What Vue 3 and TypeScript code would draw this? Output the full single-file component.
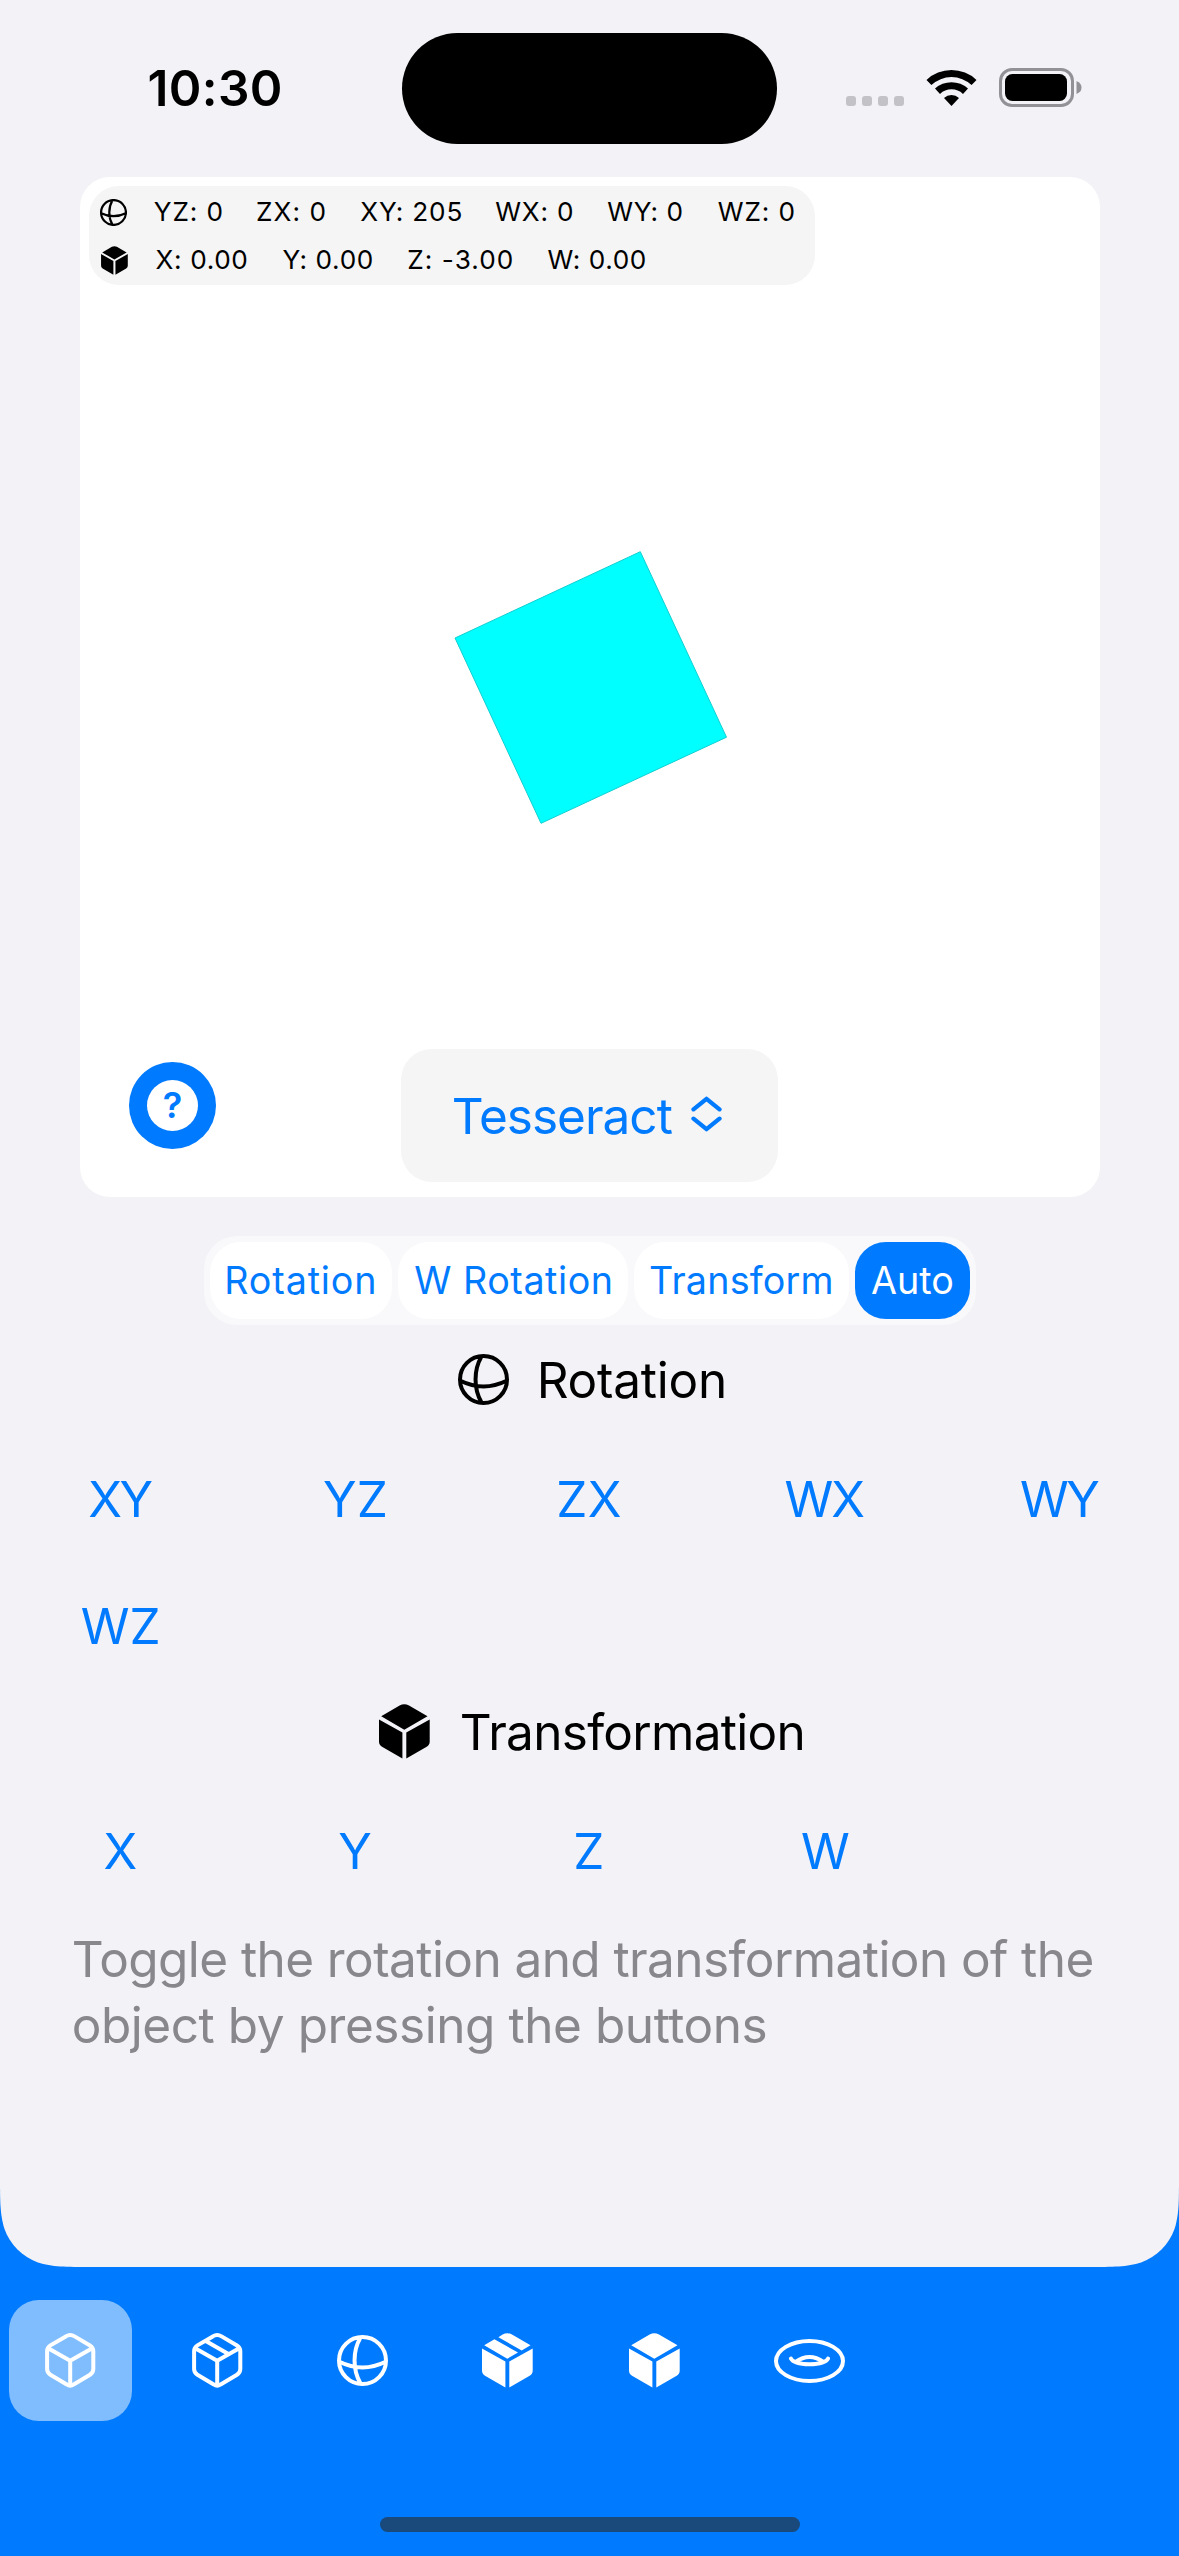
<script setup lang="ts">
import { ref } from 'vue'
import type { Directive } from 'vue'

interface Label {
  text: string
  width: number
}
interface Reading extends Label {
  gap: number
}

// Spreads the glyphs of a one-line label over an exact width by adjusting its tracking.
// Measuring at ten times the size keeps the fractions of a pixel.
const vFit: Directive<HTMLElement, number> = {
  mounted(el, { value }) {
    const ctx = document.createElement('canvas').getContext('2d')
    const text = (el.textContent ?? '').trim()
    if (!ctx || !text) return
    const css = getComputedStyle(el)
    ctx.font = `${css.fontWeight} ${parseFloat(css.fontSize) * 10}px ${css.fontFamily}`
    const m = ctx.measureText(text)
    const left = m.actualBoundingBoxLeft / 10
    const ink = left + m.actualBoundingBoxRight / 10
    if (text.length > 1) el.style.letterSpacing = `${(value - ink) / (text.length - 1)}px`
    el.style.textIndent = `${left}px`
    el.style.width = `${value}px`
  },
}

const angles: Reading[] = [
  { text: 'YZ: 0', width: 67.5, gap: 0 },
  { text: 'ZX: 0', width: 67.5, gap: 35.5 },
  { text: 'XY: 205', width: 100.5, gap: 36 },
  { text: 'WX: 0', width: 76.5, gap: 34.5 },
  { text: 'WY: 0', width: 74, gap: 35.5 },
  { text: 'WZ: 0', width: 75.5, gap: 36.5 },
]
const offsets: Reading[] = [
  { text: 'X: 0.00', width: 90.5, gap: 0 },
  { text: 'Y: 0.00', width: 89, gap: 36.5 },
  { text: 'Z: -3.00', width: 103.5, gap: 36.5 },
  { text: 'W: 0.00', width: 97, gap: 36 },
]

const modes = [
  { text: 'Rotation', width: 146.5, box: 182 },
  { text: 'W Rotation', width: 195.5, box: 230 },
  { text: 'Transform', width: 180.5, box: 215 },
  { text: 'Auto', width: 81, box: 115 },
]
const mode = ref('Auto')

const rotations: Label[] = [
  { text: 'XY', width: 63 },
  { text: 'YZ', width: 61.5 },
  { text: 'ZX', width: 61.5 },
  { text: 'WX', width: 78.5 },
  { text: 'WY', width: 78 },
  { text: 'WZ', width: 76.5 },
]
const translations: Label[] = [
  { text: 'X', width: 31 },
  { text: 'Y', width: 31 },
  { text: 'Z', width: 27.5 },
  { text: 'W', width: 45 },
]

const CUBE =
  'M20.8 3.4Q25.2 .8 29.6 3.4L45 12.4Q48.3 14.4 48.3 18.2V36Q48.3 39.8 45 41.8L28.6 51.4Q25.2 54 21.8 51.4L5.4 41.8Q2.1 39.8 2.1 36V18.2Q2.1 14.4 5.4 12.4ZM3.6 15.4L25.2 27.8L46.8 15.4M25.2 27.8V52'
const SIDES =
  'M0 15.4L23.4 28.6V54.5L3 42.8Q0 41 0 37.5ZM50.7 15.4L27.3 28.6V54.5L47.7 42.8Q50.7 41 50.7 37.5Z'
const CUBE_TOP = 'M2.2 12.2L20.6 1.5Q25.3 -1 30 1.5L48.5 12.2L25.3 25.7Z'
const BOX_TOP =
  'M2.2 12.2L12.4 6.2L36 19.6L25.3 25.7ZM16.4 4.3L20.6 1.6Q25.3 -1 30 1.5L48.5 12.2L39.7 17.4Z'
const SPHERE =
  'M25.5 2A23.5 23.5 0 1 1 25.5 49A23.5 23.5 0 1 1 25.5 2M23.4 2.8C15.6 16 15.6 35 23.4 48.2M2.4 26.8Q25.5 38.2 48.6 26.8'
const TORUS =
  'M35.5 2A33.5 20 0 1 1 35.5 42A33.5 20 0 1 1 35.5 2M17 19.6C21 27.2 50 27.2 54 19.6M21.5 23Q35.5 13 49.5 23'

const tabs = [
  { id: 'cube', box: 123, w: 51, h: 55, d: CUBE, solid: false },
  { id: 'package', box: 123, w: 51, h: 55, d: CUBE + 'M14.2 8.2L36 20.7', solid: false },
  { id: 'sphere', box: 119, w: 51, h: 51, d: SPHERE, solid: false },
  { id: 'package-solid', box: 123, w: 51, h: 55, d: SIDES + BOX_TOP, solid: true },
  { id: 'cube-solid', box: 123, w: 51, h: 55, d: SIDES + CUBE_TOP, solid: true },
  { id: 'torus', box: 139, w: 71, h: 44, d: TORUS, solid: false },
]
const tab = ref('cube')
</script>

<template>
  <div class="screen">
    <main class="panel">
      <header class="status">
        <span v-fit="131" class="time">10:30</span>
        <div class="island"></div>
        <div class="cell"><i v-for="n in 4" :key="n"></i></div>
        <svg class="wifi" width="52" height="38" viewBox="0 0 52 38">
          <path d="M.5 10.9A36.6 36.6 0 0 1 50.5 10.9L45.6 16.1A29.3 29.3 0 0 0 5.4 16.1ZM9 19.6A24.3 24.3 0 0 1 42 19.6L37 24.9A16.7 16.7 0 0 0 14 24.9ZM18 29A11 11 0 0 1 33 29L25.5 37Z" />
        </svg>
        <svg class="battery" width="84" height="40" viewBox="0 0 84 40">
          <rect x="1.5" y="1.5" width="72" height="36" rx="11.5" fill="none" stroke="#929196" stroke-width="3" />
          <rect x="6" y="6" width="62" height="27" rx="7.5" />
          <path d="M77.5 13Q82.5 15 82.5 19.5T77.5 26Z" fill="#929196" />
        </svg>
      </header>

      <section class="stage">
        <svg class="view" width="1020" height="1020" viewBox="0 0 1020 1020">
          <path d="M375 461L560.3 374.7L646.5 560.2L461 646.3Z" fill="#0ff" stroke="#10cfd2" stroke-width="1" />
        </svg>
        <div class="readout">
          <div class="line">
            <svg class="mark" width="27" height="27" viewBox="0 0 51 51"><path :d="SPHERE" fill="none" stroke="#000" stroke-width="4.2" /></svg>
            <span v-for="r in angles" :key="r.text" v-fit="r.width" :style="{ marginLeft: r.gap + 'px' }">{{ r.text }}</span>
          </div>
          <div class="line second">
            <svg class="mark" width="27" height="29" viewBox="0 0 51 55"><path :d="SIDES + CUBE_TOP" /></svg>
            <span v-for="r in offsets" :key="r.text" v-fit="r.width" :style="{ marginLeft: r.gap + 'px' }">{{ r.text }}</span>
          </div>
        </div>
        <button class="help"><span>?</span></button>
        <button class="shape">
          <span v-fit="218">Tesseract</span>
          <svg width="31" height="36" viewBox="0 0 31 36">
            <path d="M2.5 13.3L15.5 2.8L28.5 13.3M2.5 22.7L15.5 33.2L28.5 22.7" />
          </svg>
        </button>
      </section>

      <nav class="modes">
        <button
          v-for="m in modes"
          :key="m.text"
          :class="{ on: mode === m.text }"
          :style="{ width: m.box + 'px' }"
          @click="mode = m.text"
        >
          <span v-fit="m.width">{{ m.text }}</span>
        </button>
      </nav>

      <h2 class="title">
        <svg width="51" height="51" viewBox="0 0 51 51"><path :d="SPHERE" fill="none" stroke="#000" stroke-width="4" /></svg>
        <span v-fit="183">Rotation</span>
      </h2>
      <div class="axes">
        <button v-for="a in rotations" :key="a.text"><span v-fit="a.width">{{ a.text }}</span></button>
      </div>

      <h2 class="title move">
        <svg width="51" height="55" viewBox="0 0 51 55"><path :d="SIDES + CUBE_TOP" /></svg>
        <span v-fit="340">Transformation</span>
      </h2>
      <div class="axes">
        <button v-for="a in translations" :key="a.text"><span v-fit="a.width">{{ a.text }}</span></button>
      </div>

      <p class="hint">
        <span v-fit="1018.5">Toggle the rotation and transformation of the</span>
        <span v-fit="691.5">object by pressing the buttons</span>
      </p>
    </main>

    <footer class="tabs">
      <button
        v-for="t in tabs"
        :key="t.id"
        :class="{ on: tab === t.id }"
        :style="{ width: t.box + 'px' }"
        @click="tab = t.id"
      >
        <svg :width="t.w" :height="t.h" :viewBox="`0 0 ${t.w} ${t.h}`">
          <path :d="t.d" :class="t.solid ? 'solid' : 'outline'" />
        </svg>
      </button>
    </footer>
    <div class="home"></div>
  </div>
</template>

<style>
body {
  margin: 0;
  background: #007aff;
}
</style>

<style scoped>
.screen {
  display: flex;
  flex-direction: column;
  width: 1179px;
  height: 2556px;
  overflow: hidden;
  background: #007aff;
  color: #000;
  font-family: Inter, 'Liberation Sans', sans-serif;
  font-size: 49.5px;
}
button {
  display: flex;
  align-items: center;
  justify-content: center;
  margin: 0;
  padding: 0;
  border: 0;
  background: none;
  color: #007aff;
  font: inherit;
}
span {
  display: block;
  flex: none;
  white-space: nowrap;
}
svg {
  display: block;
  flex: none;
}
.panel {
  display: flex;
  flex: none;
  flex-direction: column;
  height: 2267px;
  background: #f2f2f7;
  clip-path: path('M0 0H1179V2175.3C1179 2201.7 1179 2214.9 1174.5 2229.1C1168.9 2244.6 1156.6 2256.9 1141.1 2262.5C1126.9 2267 1113.7 2267 1087.3 2267H91.7C65.3 2267 52.1 2267 37.9 2262.5C22.4 2256.9 10.1 2244.6 4.5 2229.1C0 2214.9 0 2201.7 0 2175.3Z');
}
.status {
  display: flex;
  flex: none;
  align-items: flex-start;
  height: 177px;
}
.time {
  margin: 58px 122px 0 149px;
  font-weight: 600;
  line-height: 60px;
}
.island {
  width: 375px;
  height: 111px;
  margin-top: 33.4px;
  border-radius: 56px;
  background: #000;
}
.cell {
  display: flex;
  gap: 6px;
  margin: 96px 22px 0 69px;
}
.cell i {
  width: 10px;
  height: 10px;
  border-radius: 3px;
  background: #c3c2c7;
}
.wifi {
  margin: 69px 21px 0 0;
}
.battery {
  margin-top: 68px;
}
.stage {
  position: relative;
  flex: none;
  width: 1020px;
  height: 1020px;
  margin-left: 80px;
  border-radius: 30px;
  background: #fff;
}
.readout {
  position: absolute;
  top: 9px;
  left: 9px;
  box-sizing: border-box;
  width: 726px;
  height: 99px;
  padding: 2px 0 0 11px;
  border-radius: 30px;
  background: #f5f5f5;
  font-size: 26.2px;
  line-height: 48px;
}
.line {
  display: flex;
  align-items: center;
  height: 48px;
}
.line .mark {
  margin: 0 27.2px 0 0;
}
.line.second .mark {
  margin: 0 28px 0 1px;
}
.help {
  position: absolute;
  top: 885px;
  left: 49px;
  width: 87px;
  height: 87px;
  border-radius: 50%;
  background: #007aff;
}
.help span {
  width: 51px;
  height: 51px;
  border-radius: 50%;
  background: #fff;
  font-size: 36px;
  font-weight: 600;
  line-height: 51px;
  text-align: center;
}
.shape {
  position: absolute;
  top: 872px;
  left: 321px;
  box-sizing: border-box;
  gap: 19px;
  width: 377px;
  height: 133px;
  padding-right: 3px;
  border-radius: 31px;
  background: #f5f5f5;
}
.shape svg {
  margin-top: -3px;
}
.shape path {
  fill: none;
  stroke: #007aff;
  stroke-width: 4.3;
  stroke-linecap: round;
  stroke-linejoin: round;
}
.modes {
  display: flex;
  flex: none;
  gap: 6px;
  align-self: center;
  box-sizing: border-box;
  height: 89px;
  margin-top: 39px;
  padding: 6px;
  border-radius: 33px;
  background: #f9f9fb;
  font-size: 37.7px;
}
.modes button {
  box-sizing: border-box;
  height: 77px;
  padding-bottom: 1px;
  border-radius: 31px;
  background: #fff;
}
.modes .on {
  background: #007aff;
  color: #fff;
}
.title {
  display: flex;
  flex: none;
  gap: 32px;
  align-items: center;
  justify-content: center;
  height: 51px;
  margin: 29px 0 30.5px 2px;
  font-size: inherit;
  font-weight: 400;
}
.title.move {
  height: 55px;
  margin: 14.5px 0 28.5px 2px;
}
.axes {
  display: grid;
  flex: none;
  grid-template-columns: repeat(5, 1fr);
  grid-auto-rows: 127px;
  width: 1174px;
  margin-left: 2.4px;
}
.hint {
  margin: 11.5px 0 0 74px;
  color: #88878c;
  line-height: 66px;
}
.tabs {
  display: flex;
  flex: none;
  gap: 24px;
  height: 121px;
  margin: 33px 0 0 9px;
}
.tabs button {
  flex: none;
  height: 121px;
  border-radius: 30px;
}
.tabs .on {
  background: #80bdff;
}
.outline {
  fill: none;
  stroke: #fff;
  stroke-width: 4;
  stroke-linecap: round;
  stroke-linejoin: round;
}
.solid {
  fill: #fff;
}
.home {
  flex: none;
  align-self: center;
  width: 420px;
  height: 15px;
  margin-top: 96px;
  border-radius: 8px;
  background: #1a4a7b;
}
</style>
